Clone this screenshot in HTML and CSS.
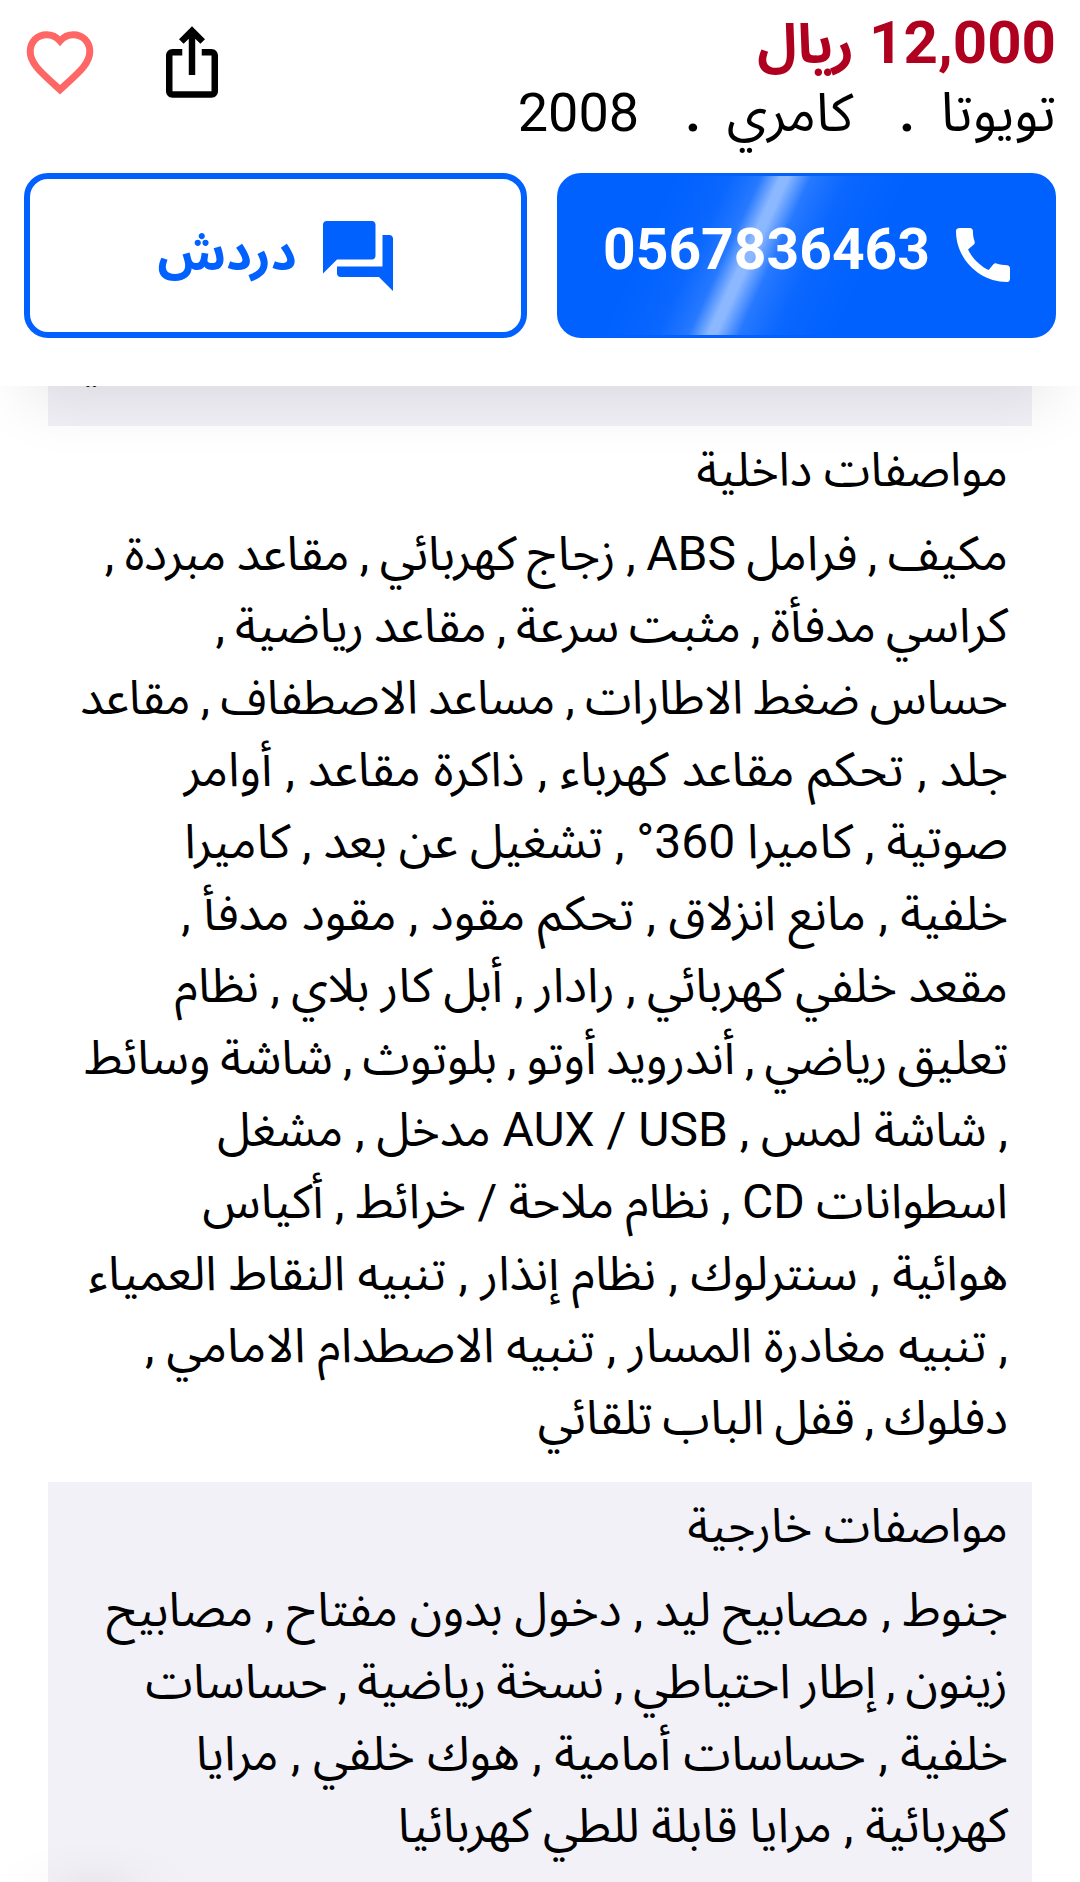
FILE: index.html
```
<!DOCTYPE html>
<html dir="rtl" lang="ar">
<head>
<meta charset="utf-8">
<title>تويوتا كامري 2008</title>
<link rel="stylesheet" href="styles.css">
</head>
<body>
<header class="bar">
  <div class="top">
    <div class="summary">
      <div class="price">12,000 <span class="currency">ريال</span></div>
      <div class="model"><span>تويوتا</span><i class="dot">.</i><span class="name">كامري</span><i class="dot">.</i><span class="year">2008</span></div>
    </div>
    <div class="actions">
      <svg class="share" viewBox="0 0 24 24"><path d="M16 5l-1.42 1.42-1.59-1.59V16h-1.98V4.83L9.42 6.42 8 5l4-4 4 4zm4 5v11c0 1.1-.9 2-2 2H6c-1.1 0-2-.9-2-2V10c0-1.1.9-2 2-2h3v2H6v11h12V10h-3V8h3c1.1 0 2 .9 2 2z"/></svg>
      <svg class="heart" viewBox="0 0 68 64"><path d="M34 10C30.5 6 26 3.7 20.7 3.7C11.3 3.7 4.2 11 4.2 20.3C4.2 32.5 14 40.5 34 58.7C54 40.5 63.8 32.5 63.8 20.3C63.8 11 56.7 3.7 47.3 3.7C42 3.7 37.5 6 34 10Z"/></svg>
    </div>
  </div>
  <div class="buttons">
    <a class="btn call">
      <svg class="phone" viewBox="0 0 24 24"><path d="M20.01 15.38c-1.23 0-2.42-.2-3.53-.56-.35-.12-.74-.03-1.01.24l-1.57 1.97c-2.83-1.35-5.48-3.9-6.89-6.83l1.95-1.66c.27-.28.35-.67.24-1.02-.37-1.11-.56-2.3-.56-3.53 0-.54-.45-.99-.99-.99H4.19C3.65 3 3 3.24 3 3.99 3 13.28 10.73 21 20.01 21c.71 0 .99-.63.99-1.18v-3.45c0-.54-.45-.99-.99-.99z"/></svg>
      <span>0567836463</span>
    </a>
    <a class="btn chat">
      <svg class="forum" viewBox="0 0 24 24"><path d="M21 6h-2v9H6v2c0 .55.45 1 1 1h11l4 4V7c0-.55-.45-1-1-1zm-4 6V3c0-.55-.45-1-1-1H3c-.55 0-1 .45-1 1v14l4-4h10c.55 0 1-.45 1-1z"/></svg>
      <span>دردش</span>
    </a>
  </div>
</header>
<main>
  <section class="spec tail">ي</section>
  <section class="spec">
    <h2>مواصفات داخلية</h2>
    <p>
      <span class="line snug">مكيف , فرامل ABS , زجاج كهربائي , مقاعد مبردة ,</span>
      <span class="line tight">كراسي مدفأة , مثبت سرعة , مقاعد رياضية ,</span>
      <span class="line small">حساس ضغط الاطارات , مساعد الاصطفاف , مقاعد</span>
      <span class="line loose">جلد , تحكم مقاعد كهرباء , ذاكرة مقاعد , أوامر</span>
      <span class="line">صوتية , كاميرا 360° , تشغيل عن بعد , كاميرا</span>
      <span class="line open">خلفية , مانع انزلاق , تحكم مقود , مقود مدفأ ,</span>
      <span class="line close">مقعد خلفي كهربائي , رادار , أبل كار بلاي , نظام</span>
      <span class="line tight">تعليق رياضي , أندرويد أوتو , بلوتوث , شاشة وسائط</span>
      <span class="line">, شاشة لمس , AUX / USB مدخل , مشغل</span>
      <span class="line close">اسطوانات CD , نظام ملاحة / خرائط , أكياس</span>
      <span class="line open">هوائية , سنترلوك , نظام إنذار , تنبيه النقاط العمياء</span>
      <span class="line">, تنبيه مغادرة المسار , تنبيه الاصطدام الامامي ,</span>
      <span class="line tight">دفلوك , قفل الباب تلقائي</span>
    </p>
  </section>
  <section class="spec shaded">
    <h2>مواصفات خارجية</h2>
    <p>
      <span class="line">جنوط , مصابيح ليد , دخول بدون مفتاح , مصابيح</span>
      <span class="line tight">زينون , إطار احتياطي , نسخة رياضية , حساسات</span>
      <span class="line open">خلفية , حساسات أمامية , هوك خلفي , مرايا</span>
      <span class="line">كهربائية , مرايا قابلة للطي كهربائيا</span>
    </p>
  </section>
</main>
<div class="glow"></div>
</body>
</html>
```
FILE: styles.css
```
* { box-sizing: border-box; }
html, body { height: 1882px; overflow: hidden; }
body { margin: 0; background: #fff; color: #000; font-family: Roboto, "Noto Sans Arabic", "DejaVu Sans", sans-serif; position: relative; }
.bar { position: relative; z-index: 2; height: 386px; padding: 0 24px; background: #fff; box-shadow: 0 44px 56px -26px rgba(0, 0, 0, .09); }
.top { height: 173px; display: flex; justify-content: space-between; }
.price { height: 84px; line-height: 86px; font-size: 60px; font-weight: 700; color: #b00020; }
.currency { font-size: 54px; }
.model { display: flex; align-items: baseline; height: 65px; line-height: 58px; font-size: 54px; }
.name { font-size: 53px; }
.dot { font-style: normal; font-weight: 700; margin: 0 26px 0 46px; }
.actions { display: flex; padding: 23px 0 0 2px; }
.share { width: 78px; height: 78px; margin-left: 59px; }
.heart { width: 68px; height: 64px; margin-top: 8px; fill: none; stroke: #ff6666; stroke-width: 7; }
.buttons { display: flex; justify-content: space-between; }
.btn { display: flex; align-items: center; justify-content: center; height: 165px; border-radius: 24px; font-size: 57px; font-weight: 700; }
.btn span { line-height: 80px; margin-top: -12px; }
.call { width: 499px; padding-left: 9px; color: #fff; border: 3px solid #0061ff; background: linear-gradient(114.7deg, transparent 20%, rgba(255,255,255,.04) 30%, rgba(255,255,255,.15) 35.5%, rgba(255,255,255,.55) 39%, rgba(255,255,255,.55) 40.5%, rgba(255,255,255,.15) 44.5%, rgba(255,255,255,.04) 51%, transparent 62%) padding-box, #0061ff; }
.phone { width: 72px; height: 72px; fill: #fff; margin: -2px 0 0 17px; }
.chat { width: 503px; padding-left: 6px; border: 6px solid #0061ff; color: #0061ff; font-size: 50px; }
.chat span { margin-top: -5px; }
.forum { width: 84px; height: 84px; fill: #0061ff; margin-left: 19px; }
.spec { margin: 0 48px; padding: 0 24px; }
.tail { height: 110px; margin-top: -70px; padding-left: 26px; background: #f2f1f8; font-size: 48px; line-height: 70px; text-align: left; }
h2, p { margin: 0; font-size: 48px; font-weight: 400; line-height: 72px; white-space: nowrap; }
h2 { padding-top: 8px; height: 92px; font-size: 47px; }
p { height: 964px; }
.line { display: block; height: 72px; }
.snug { word-spacing: -1.4px; }
.tight { word-spacing: -1.9px; }
.close { word-spacing: -.5px; }
.open { word-spacing: .6px; }
.loose { word-spacing: 1.3px; }
.small { font-size: 47px; word-spacing: -1.3px; }
.shaded { background: #f2f1f8; height: 400px; }
.shaded p { height: 288px; }
.glow { position: absolute; left: 0; bottom: 0; width: 200px; height: 42px; background: radial-gradient(ellipse 100px 42px at 95px 100%, rgba(0, 0, 0, .04), rgba(0, 0, 0, .013) 50%, transparent); }
```
